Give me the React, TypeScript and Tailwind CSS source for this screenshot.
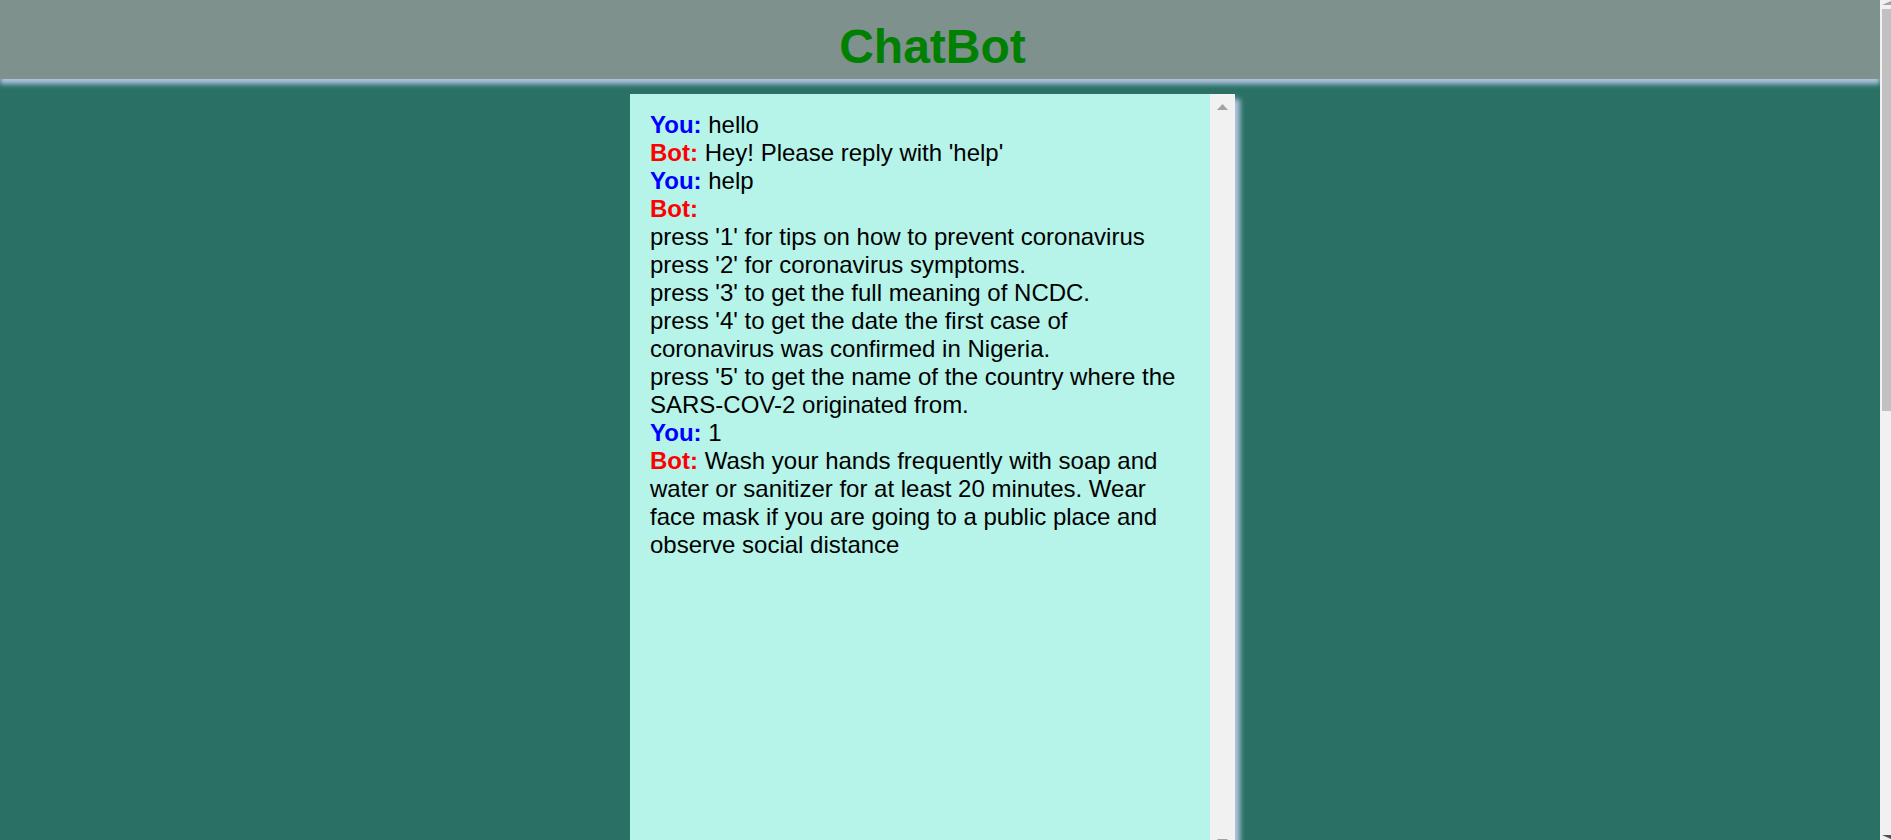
const messages: { from: "You" | "Bot"; lines: string[] }[] = [
  { from: "You", lines: ["hello"] },
  { from: "Bot", lines: ["Hey! Please reply with 'help'"] },
  { from: "You", lines: ["help"] },
  {
    from: "Bot",
    lines: [
      "",
      "press '1' for tips on how to prevent coronavirus",
      "press '2' for coronavirus symptoms.",
      "press '3' to get the full meaning of NCDC.",
      "press '4' to get the date the first case of coronavirus was confirmed in Nigeria.",
      "press '5' to get the name of the country where the SARS-COV-2 originated from.",
    ],
  },
  { from: "You", lines: ["1"] },
  {
    from: "Bot",
    lines: [
      "Wash your hands frequently with soap and water or sanitizer for at least 20 minutes. Wear face mask if you are going to a public place and observe social distance",
    ],
  },
];

function Tri({ down }: { down?: boolean }) {
  return (
    <svg width="11" height="6" viewBox="0 0 11 6" className="block">
      {down ? <polygon points="0,0 11,0 5.5,6" fill="#a3a3a3" /> : <polygon points="5.5,0 11,6 0,6" fill="#a3a3a3" />}
    </svg>
  );
}

export default function App() {
  return (
    <div className="flex h-screen overflow-hidden bg-[#2a7065] font-['Liberation_Sans',Arial,sans-serif]">
      <div className="flex-1 flex flex-col">
        <header className="h-[79px] shrink-0 bg-[#7f918d] shadow-[0_5px_5px_#b0c4de] pr-[15px] pt-[19px]">
          <h1 className="text-center text-[48px] leading-[55px] font-bold text-[#008000]">ChatBot</h1>
        </header>

        <div className="flex flex-col items-center pr-[15px] pt-[15px]">
          <div className="flex w-[605px] h-[761px] shrink-0 bg-[#b6f3e9] shadow-[5px_5px_5px_#b0c4de]">
            <div className="flex-1 pl-[20px] pr-[20px] pt-[17px] text-[24px] leading-[28px] text-black">
              {messages.map((m, i) => (
                <div key={i}>
                  <span className={m.from === "You" ? "font-bold text-[#0000ff]" : "font-bold text-[#ff0000]"}>
                    {m.from}:
                  </span>{" "}
                  {m.lines.map((l, j) => (
                    <span key={j}>
                      {j > 0 && <br />}
                      {l}
                    </span>
                  ))}
                </div>
              ))}
            </div>
            <div className="w-[25px] bg-[#f1f1f1] flex flex-col items-center justify-between py-[10px]">
              <Tri />
              <Tri down />
            </div>
          </div>
        </div>
      </div>

      <div className="w-[11px] h-full bg-[#f1f1f1] flex flex-col items-end pt-[1px] pb-[1px]">
        <svg width="9" height="4" viewBox="0 0 9 4" className="block">
          <polygon points="9,0 9,4 0,4" fill="#a3a3a3" />
        </svg>
        <div className="w-[9px] h-[402px] mt-[4px] bg-[#c1c1c1]" />
        <div className="flex-1" />
        <svg width="9" height="4" viewBox="0 0 9 4" className="block">
          <polygon points="0,0 9,0 9,4" fill="#505050" />
        </svg>
      </div>
    </div>
  );
}
